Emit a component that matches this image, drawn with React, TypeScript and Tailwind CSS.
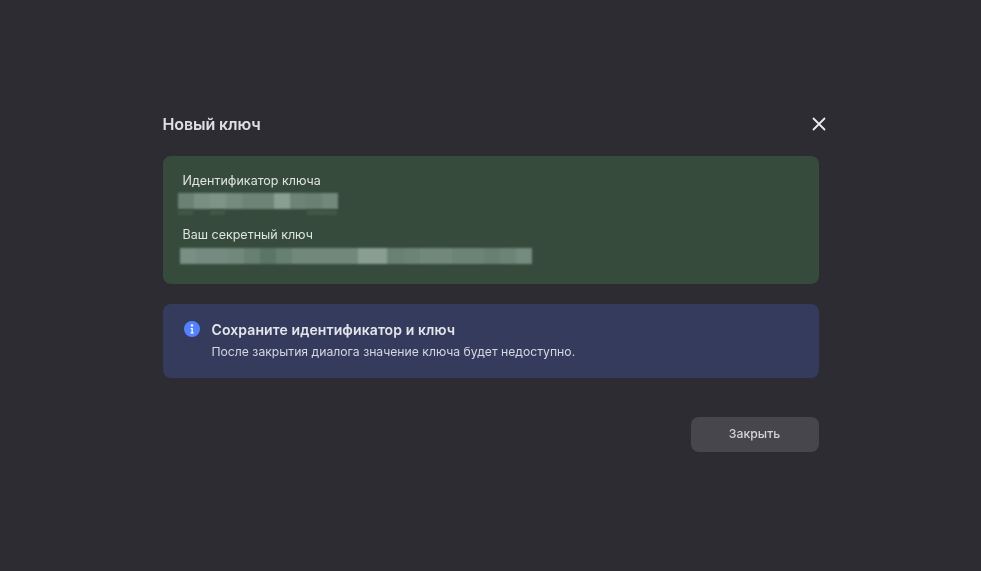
const idBlocks: [number, string][] = [
  [16, "#6a8273"], [16, "#7a8f83"], [16, "#7f9487"], [16, "#758b7f"], [16, "#6c8476"], [16, "#6c8476"],
  [16, "#8a9f92"], [16, "#6c8476"], [16, "#698173"], [16, "#72887b"],
];
const idTail: [number, number][] = [[0, 15], [32, 15], [129, 30]];
const keyBlocks: [number, string][] = [
  [16, "#7a8f83"], [16, "#758b7f"], [16, "#758b7f"], [16, "#72887b"], [16, "#678071"], [16, "#5a7566"],
  [16, "#678071"], [16, "#72887b"], [16, "#72887b"], [16, "#72887b"], [18, "#72887b"], [15, "#8a9f92"], [14, "#8a9f92"],
  [17, "#698173"], [16, "#6c8476"], [16, "#72887b"], [16, "#72887b"], [16, "#6c8476"], [16, "#6c8476"], [16, "#678071"],
  [16, "#6c8476"], [16, "#758b7f"],
];

function Redacted({ blocks }: { blocks: [number, string][] }) {
  return (
    <div className="flex h-4 overflow-hidden blur-[1px]">
      {blocks.map(([w, c], i) => (
        <div key={i} className="h-full shrink-0" style={{ width: w, backgroundColor: c }} />
      ))}
    </div>
  );
}

export default function App() {
  return (
    <div className="flex h-[571px] w-full justify-center bg-[#2d2c33] pt-[112px] font-['Inter','Noto_Sans',sans-serif] text-[#e6e6e8] blur-[0.3px]">
      <div className="flex w-[656px] flex-col">
        <div className="flex h-6 items-center justify-between">
          <h1 className="text-[16px] font-semibold leading-6 tracking-[-0.1px] text-[#e0e0e3]">Новый ключ</h1>
          <svg width="14" height="14" viewBox="0 0 14 14" fill="none" className="mr-[-7px]">
            <path d="M1.5 1.5L12.5 12.5M12.5 1.5L1.5 12.5" stroke="#ececee" strokeWidth="1.8" strokeLinecap="round" />
          </svg>
        </div>

        <div className="mt-5 flex h-[128px] flex-col rounded-lg bg-[#374b3d] pl-5 pt-[17px]">
          <p className="text-[12.5px] leading-4 text-[#dfe4df]">Идентификатор ключа</p>
          <div className="relative ml-[-5px] mt-1 w-[160px]">
            <Redacted blocks={idBlocks} />
            {idTail.map(([l, w]) => (
              <div key={l} className="absolute top-[17px] h-[5px] bg-[#435747] blur-[1px]" style={{ left: l, width: w }} />
            ))}
          </div>
          <p className="mt-[18px] text-[12.5px] leading-4 text-[#dfe4df]">Ваш секретный ключ</p>
          <div className="ml-[-3px] mt-[5px] w-[353px]"><Redacted blocks={keyBlocks} /></div>
        </div>

        <div className="mt-5 flex h-[74px] rounded-lg bg-[#343b5c] pl-[21px] pt-4">
          <svg width="16" height="16" viewBox="0 0 16 16" className="mt-[1px] shrink-0">
            <circle cx="8" cy="8" r="8" fill="#5282ff" />
            <circle cx="8" cy="4.4" r="1.2" fill="#ffffff" />
            <path d="M6.6 7h2.2v4.4h1v1.1H6.4v-1.1h1.1V8.1H6.6z" fill="#ffffff" />
          </svg>
          <div className="ml-[12px] flex flex-col">
            <p className="mt-[1px] text-[14px] font-semibold leading-[18px] tracking-[0.1px] text-[#e4e5ea]">Сохраните идентификатор и ключ</p>
            <p className="mt-[5px] text-[12.2px] leading-4 text-[#d6d7df]">После закрытия диалога значение ключа будет недоступно.</p>
          </div>
        </div>

        <div className="mt-[39px] flex justify-end">
          <button className="h-[35px] w-[128px] rounded-lg bg-[#47464c] text-[12.25px] font-medium text-[#d4d4d6]">Закрыть</button>
        </div>
      </div>
    </div>
  );
}
